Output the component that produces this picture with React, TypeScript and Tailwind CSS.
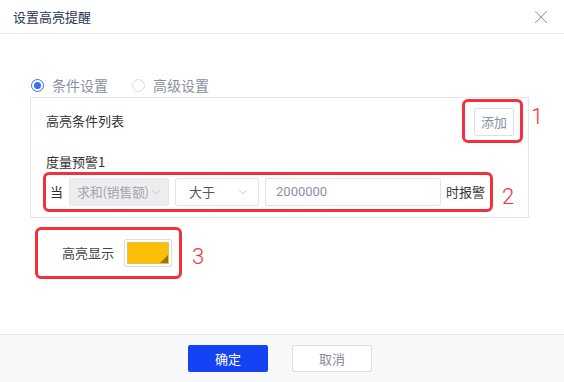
import React from 'react'
import { X, ChevronDown } from 'lucide-react'

function Radio({ checked, label }: { checked?: boolean; label: string }) {
  return (
    <label className="flex items-center gap-[8px] text-[14px] leading-[20px] text-[#8a8fa3]">
      <span
        className={
          checked
            ? 'flex h-[13px] w-[13px] items-center justify-center rounded-full border border-[#3d6ef5]'
            : 'flex h-[13px] w-[13px] items-center justify-center rounded-full border border-[#dcdde3]'
        }
      >
        {checked && <span className="h-[7px] w-[7px] rounded-full bg-[#3d6ef5]" />}
      </span>
      {label}
    </label>
  )
}

export default function App() {
  return (
    <div className="flex h-[382px] w-[564px] flex-col bg-white font-['Noto_Sans_CJK_SC',sans-serif] text-[13px] text-[#333]">
      {/* header */}
      <div className="flex h-[34px] shrink-0 items-center justify-between border-b border-[#e8e9ee] pl-[13px] pr-[12px]">
        <span className="text-[13px] text-[#2b3656]">设置高亮提醒</span>
        <X size={22} strokeWidth={1.1} className="text-[#9a9a9a]" />
      </div>

      {/* body */}
      <div className="flex-1 px-[30px] pt-[41px]">
        <div className="ml-[1px] flex items-center gap-[24px]">
          <Radio checked label="条件设置" />
          <Radio label="高级设置" />
        </div>

        <div className="mt-[2px] w-[499px] border border-[#e4e5eb] pb-[5px] pt-[1px]">
          <div className="flex items-center justify-between pl-[15px] pr-[5px]">
            <span className="text-[13px] text-[#333]">高亮条件列表</span>
            <div className="relative rounded-[6px] border-[3px] border-[#f2303e] pb-[4px] pl-[9px] pr-[6px] pt-[6px]">
              <button className="flex h-[28px] w-[40px] items-center justify-center rounded-[2px] border border-[#dedfe4] bg-white text-[13px] text-[#8890a6]">
                添加
              </button>
              <span className="absolute left-[calc(100%+11px)] top-[4px] font-['Roboto',sans-serif] text-[22px] font-light leading-none text-[#f2303e]">
                1
              </span>
            </div>
          </div>

          <div className="ml-[15px] mt-[10px] text-[13px] leading-[18px] text-[#333]">度量预警1</div>

          <div className="relative ml-[12px] mt-[1px] flex h-[40px] w-[450px] items-center gap-[6px] rounded-[6px] border-[3px] border-[#f2303e] pl-[4px]">
            <span className="text-[13px] text-[#333]">当</span>
            <div className="flex h-[28px] w-[100px] shrink-0 items-center justify-between rounded-[2px] border border-[#e6e7ea] bg-[#ededef] pl-[7px] pr-[7px] text-[13px] text-[#a2a4ac]">
              <span className="whitespace-nowrap tracking-[-0.3px]">求和(销售额)</span>
              <ChevronDown size={14} strokeWidth={1.3} className="shrink-0 text-[#b5b7bf]" />
            </div>
            <div className="flex h-[28px] w-[84px] shrink-0 items-center justify-between rounded-[2px] border border-[#e2e3e8] bg-white pl-[13px] pr-[8px] text-[13px] text-[#555]">
              <span>大于</span>
              <ChevronDown size={14} strokeWidth={1.3} className="text-[#b5b7bf]" />
            </div>
            <div className="flex h-[28px] w-[176px] shrink-0 items-center rounded-[2px] border border-[#e2e3e8] bg-white pl-[10px] font-['Roboto',sans-serif] text-[13px] text-[#8a90a8]">
              2000000
            </div>
            <span className="-ml-[1px] whitespace-nowrap text-[13px] text-[#333]">时报警</span>
            <span className="absolute left-[calc(100%+12px)] top-[11px] font-['Roboto',sans-serif] text-[22px] font-light leading-none text-[#f2303e]">
              2
            </span>
          </div>
        </div>

        <div className="relative ml-[5px] mt-[9px] flex h-[52px] w-[147px] items-center gap-[10px] rounded-[6px] border-[3px] border-[#f2303e] pl-[24px]">
          <span className="text-[13px] text-[#444]">高亮显示</span>
          <div className="h-[28px] w-[48px] rounded-[2px] border border-[#dcdee3] bg-white p-[2px]">
            <div className="relative h-full w-full border border-[#e0c060] bg-[#fcbf07]">
              <svg className="absolute bottom-0 right-0" width="8" height="8" viewBox="0 0 8 8">
                <polygon points="8,0 8,8 0,8" fill="#9a7406" />
              </svg>
            </div>
          </div>
          <span className="absolute left-[calc(100%+13px)] top-[16px] font-['Roboto',sans-serif] text-[22px] font-light leading-none text-[#f2303e]">
            3
          </span>
        </div>
      </div>

      {/* footer */}
      <div className="flex h-[48px] shrink-0 items-center justify-center gap-[24px] border-t border-[#e8e9ee] bg-[#f7f8fa] pr-[4px]">
        <button className="h-[27px] w-[80px] rounded-[2px] bg-[#1443f5] text-[13px] text-white">确定</button>
        <button className="h-[27px] w-[80px] rounded-[2px] border border-[#dcdde3] bg-white text-[13px] text-[#868b9e]">
          取消
        </button>
      </div>
    </div>
  )
}
